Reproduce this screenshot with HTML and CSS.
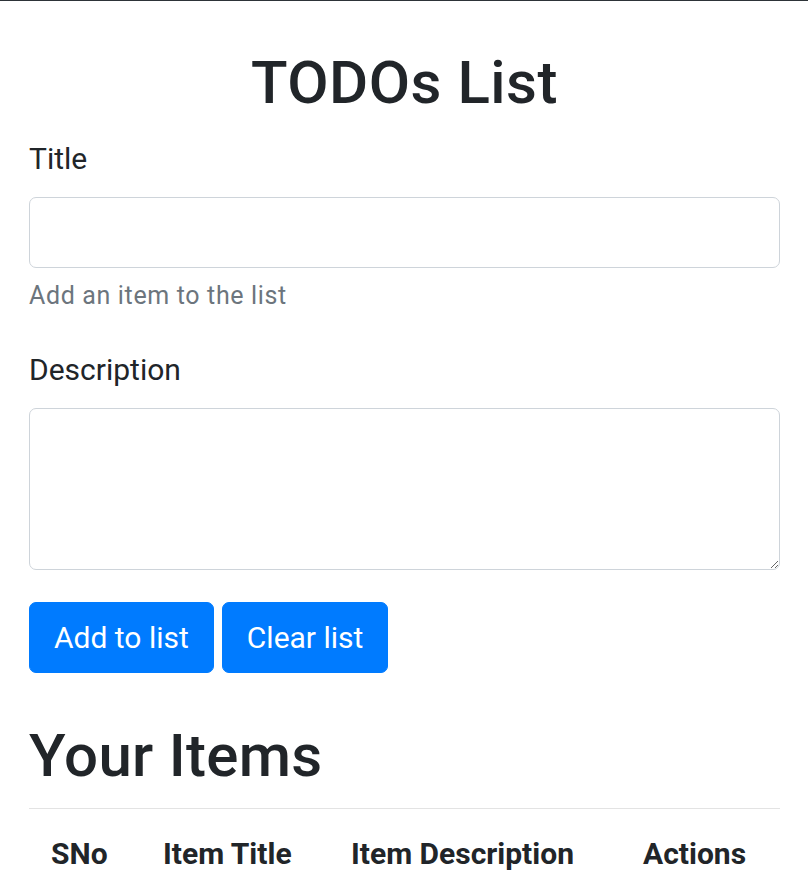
FILE: index.html
```html
<!DOCTYPE html>
<html lang="en">
<head>
<meta charset="utf-8">
<title>TODOs List</title>
<link rel="stylesheet" href="styles.css">
</head>
<body>
<div class="topbar"></div>
<div class="container">
  <h1 class="page-title">TODOs List</h1>
  <div class="form-group">
    <label class="field-label" for="title">Title</label>
    <input class="form-control" id="title" type="text">
    <small class="form-text">Add an item to the list</small>
  </div>
  <div class="form-group">
    <label class="field-label" for="description">Description</label>
    <textarea class="form-control textarea" id="description" rows="3"></textarea>
  </div>
  <div class="actions">
    <button class="btn" type="button">Add to list</button>
    <button class="btn" type="button">Clear list</button>
  </div>
  <h2 class="section-title">Your Items</h2>
  <table class="items">
    <colgroup>
      <col class="c1"><col class="c2"><col class="c3"><col class="c4">
    </colgroup>
    <thead>
      <tr>
        <th>SNo</th>
        <th>Item Title</th>
        <th>Item Description</th>
        <th>Actions</th>
      </tr>
    </thead>
  </table>
</div>
</body>
</html>
```

FILE: styles.css
```css
* { box-sizing: border-box; }
html, body {
  margin: 0;
  padding: 0;
  background: #ffffff;
}
body {
  font-family: Roboto, "Liberation Sans", Arial, sans-serif;
  color: #212529;
  font-size: 30px;
  line-height: 45px;
  overflow: hidden;
}
.topbar {
  height: 1px;
  background: #2d3338;
}
.container {
  padding: 46px 28px 0 29px;
}
.page-title {
  margin: 0 0 17px 0;
  font-size: 60px;
  line-height: 72px;
  font-weight: 500;
  text-align: center;
  letter-spacing: 0.5px;
}
.form-group {
  display: flex;
  flex-direction: column;
  margin-bottom: 33px;
}
.form-group:nth-of-type(2) {
  margin-bottom: 32px;
}
.field-label {
  display: block;
  font-size: 30px;
  line-height: 45px;
  margin-bottom: 16px;
}
.form-control {
  display: block;
  width: 100%;
  height: 71px;
  border: 1px solid #ced4da;
  border-radius: 7px;
  background: #fff;
  font-family: inherit;
  font-size: 30px;
  padding: 7px 22px;
  margin: 0;
}
.textarea {
  height: 162px;
  resize: vertical;
}
.form-text {
  display: block;
  margin-top: 10px;
  font-size: 25px;
  line-height: 36px;
  letter-spacing: 0.65px;
  color: #6c757d;
}
.actions {
  display: flex;
  gap: 8px;
}
.btn {
  height: 71px;
  padding: 0 24px;
  border: 1px solid #007bff;
  background: #007bff;
  color: #ffffff;
  border-radius: 7px;
  font-family: inherit;
  font-size: 30px;
  line-height: 45px;
  font-weight: 400;
  cursor: pointer;
}
.section-title {
  margin: 47px 0 16px 0;
  font-size: 60px;
  line-height: 72px;
  font-weight: 500;
  letter-spacing: 0.3px;
}
.items {
  width: 100%;
  border-collapse: collapse;
  table-layout: fixed;
}
.c1 { width: 112px; }
.c2 { width: 188px; }
.c3 { width: 292px; }
.c4 { width: 159px; }
.items th {
  text-align: left;
  font-weight: 700;
  font-size: 30px;
  line-height: 45px;
  padding: 22px 22px;
  border-top: 1px solid #e3e3e3;
  white-space: nowrap;
}
```
